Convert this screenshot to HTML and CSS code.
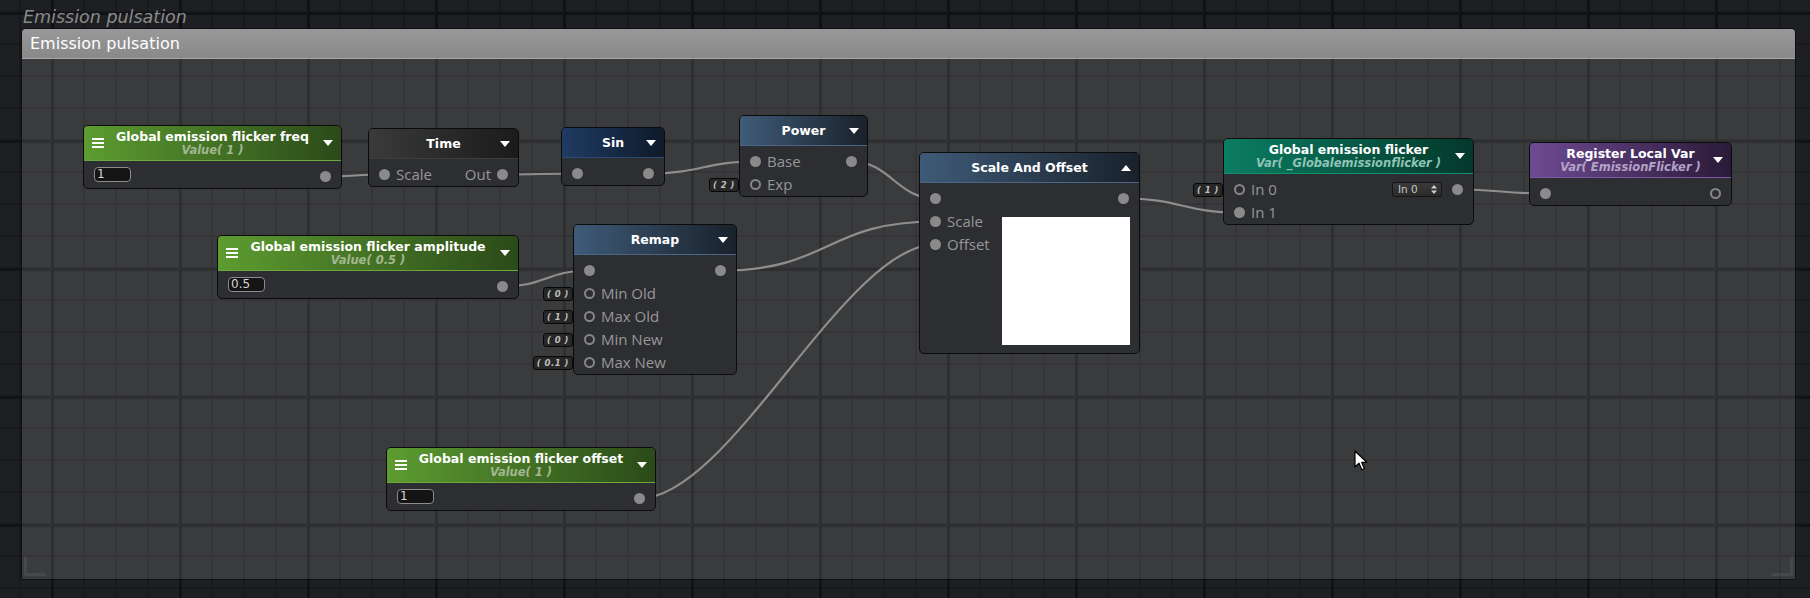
FILE: index.html
```html
<!DOCTYPE html>
<html>
<head>
<meta charset="utf-8">
<title>Emission pulsation</title>
<link rel="stylesheet" href="styles.css">
</head>
<body>
<div class="canvas">
  <div class="group">
    <div class="group-title">Emission pulsation</div>
    <div class="group-box">
      <div class="group-head">Emission pulsation</div>
      <svg class="corner corner-bl" width="26" height="26" viewBox="0 0 26 26"><path d="M2 2 L5 5 L5 20 L22 20 L25 23 L2 23 Z" fill="rgba(255,255,255,0.07)"/></svg>
      <svg class="corner corner-br" width="26" height="26" viewBox="0 0 26 26"><path d="M24 2 L21 5 L21 20 L4 20 L1 23 L24 23 Z" fill="rgba(255,255,255,0.07)"/></svg>
    </div>
  </div>

  <svg class="wires" width="1810" height="598" viewBox="0 0 1810 598">
    <g fill="none" stroke="#8e8e8e" stroke-width="2.2" stroke-linecap="round">
      <path d="M325.5 176.5 C350 176.5 360 174.5 384.5 174.5"/>
      <path d="M502.5 174.5 C530 174.5 550 173.5 577.5 173.5"/>
      <path d="M648.5 173.5 C700 173.5 705 161.5 755.5 161.5"/>
      <path d="M851.5 161.5 C890 161.5 897 198.5 935.5 198.5"/>
      <path d="M502.5 286.5 C545 286.5 547 270.5 589.5 270.5"/>
      <path d="M720.5 270.5 C830 270.5 826 221.5 935.5 221.5"/>
      <path d="M639.5 498.5 C730 498.5 845 244.5 935.5 244.5"/>
      <path d="M1123.5 198.5 C1180 198.5 1183 212.5 1239.5 212.5"/>
      <path d="M1457.5 189.5 C1500 189.5 1503 193.5 1545.5 193.5"/>
    </g>
  </svg>

  <!-- Global emission flicker freq -->
  <div class="node green n-freq">
    <div class="hd two">
      <span class="menu"><i></i><i></i><i></i></span>
      <div class="ttl"><div class="t">Global emission flicker freq</div><div class="s">Value( 1 )</div></div>
      <span class="arr"></span>
    </div>
    <div class="bd">
      <div class="row"><span class="val">1</span><span class="fill"></span><span class="port"></span></div>
    </div>
  </div>

  <!-- Time -->
  <div class="node dark n-time">
    <div class="hd">
      <span></span>
      <div class="ttl"><div class="t">Time</div></div>
      <span class="arr"></span>
    </div>
    <div class="bd">
      <div class="row"><span class="port"></span><span class="lbl">Scale</span><span class="fill"></span><span class="lbl">Out</span><span class="port"></span></div>
    </div>
  </div>

  <!-- Sin -->
  <div class="node navy n-sin">
    <div class="hd">
      <span></span>
      <div class="ttl"><div class="t">Sin</div></div>
      <span class="arr"></span>
    </div>
    <div class="bd">
      <div class="row"><span class="port"></span><span class="fill"></span><span class="port"></span></div>
    </div>
  </div>

  <!-- Power -->
  <div class="node steel n-power">
    <div class="hd">
      <span></span>
      <div class="ttl"><div class="t">Power</div></div>
      <span class="arr"></span>
    </div>
    <div class="bd">
      <div class="row"><span class="port"></span><span class="lbl">Base</span><span class="fill"></span><span class="port"></span></div>
      <div class="row"><span class="tag">( 2 )</span><span class="port ring"></span><span class="lbl">Exp</span></div>
    </div>
  </div>

  <!-- Global emission flicker amplitude -->
  <div class="node green n-amp">
    <div class="hd two">
      <span class="menu"><i></i><i></i><i></i></span>
      <div class="ttl"><div class="t">Global emission flicker amplitude</div><div class="s">Value( 0.5 )</div></div>
      <span class="arr"></span>
    </div>
    <div class="bd">
      <div class="row"><span class="val">0.5</span><span class="fill"></span><span class="port"></span></div>
    </div>
  </div>

  <!-- Remap -->
  <div class="node steel n-remap">
    <div class="hd">
      <span></span>
      <div class="ttl"><div class="t">Remap</div></div>
      <span class="arr"></span>
    </div>
    <div class="bd">
      <div class="row"><span class="port"></span><span class="fill"></span><span class="port"></span></div>
      <div class="row"><span class="tag">( 0 )</span><span class="port ring"></span><span class="lbl">Min Old</span></div>
      <div class="row"><span class="tag">( 1 )</span><span class="port ring"></span><span class="lbl">Max Old</span></div>
      <div class="row"><span class="tag">( 0 )</span><span class="port ring"></span><span class="lbl">Min New</span></div>
      <div class="row"><span class="tag">( 0.1 )</span><span class="port ring"></span><span class="lbl">Max New</span></div>
    </div>
  </div>

  <!-- Global emission flicker offset -->
  <div class="node green n-offset">
    <div class="hd two">
      <span class="menu"><i></i><i></i><i></i></span>
      <div class="ttl"><div class="t">Global emission flicker offset</div><div class="s">Value( 1 )</div></div>
      <span class="arr"></span>
    </div>
    <div class="bd">
      <div class="row"><span class="val">1</span><span class="fill"></span><span class="port"></span></div>
    </div>
  </div>

  <!-- Scale And Offset -->
  <div class="node steel n-sao">
    <div class="hd">
      <span></span>
      <div class="ttl"><div class="t">Scale And Offset</div></div>
      <span class="arr up"></span>
    </div>
    <div class="bd bd-sao">
      <div class="row"><span class="port"></span><span class="fill"></span><span class="port"></span></div>
      <div class="sao-main">
        <div class="sao-col">
          <div class="row"><span class="port"></span><span class="lbl">Scale</span></div>
          <div class="row"><span class="port"></span><span class="lbl">Offset</span></div>
        </div>
        <div class="preview"></div>
      </div>
    </div>
  </div>

  <!-- Global emission flicker (Var) -->
  <div class="node teal n-teal">
    <div class="hd two">
      <span></span>
      <div class="ttl"><div class="t">Global emission flicker</div><div class="s">Var( _Globalemissionflicker )</div></div>
      <span class="arr"></span>
    </div>
    <div class="bd">
      <div class="row"><span class="tag">( 1 )</span><span class="port ring"></span><span class="lbl">In 0</span><span class="fill"></span>
        <span class="dd"><span>In 0</span><svg width="6" height="9" viewBox="0 0 6 9"><path d="M3 0 L6 3.5 L0 3.5 Z M0 5.5 L6 5.5 L3 9 Z" fill="#cfcfcf"/></svg></span>
        <span class="port"></span></div>
      <div class="row"><span class="port"></span><span class="lbl">In 1</span></div>
    </div>
  </div>

  <!-- Register Local Var -->
  <div class="node purple n-reg">
    <div class="hd two">
      <span></span>
      <div class="ttl"><div class="t">Register Local Var</div><div class="s">Var( EmissionFlicker )</div></div>
      <span class="arr"></span>
    </div>
    <div class="bd">
      <div class="row"><span class="port"></span><span class="fill"></span><span class="port ring"></span></div>
    </div>
  </div>

  <svg class="cursor" width="14" height="22" viewBox="0 0 14 22"><path d="M1 1 L1 17 L5 13.2 L7.8 19.8 L10.4 18.7 L7.7 12.3 L12.8 12.3 Z" fill="#fff" stroke="#000" stroke-width="1.2" stroke-linejoin="round"/></svg>
</div>
</body>
</html>
```

FILE: styles.css
```css
* { box-sizing: border-box; }

html, body {
  margin: 0;
  padding: 0;
  background: #1f2023;
}

.canvas {
  position: relative;
  width: 1810px;
  height: 598px;
  overflow: hidden;
  background-color: #1e1f22;
  background-image:
    linear-gradient(to right, #111214 0, #111214 3px, transparent 3px),
    linear-gradient(to bottom, #111214 0, #111214 3px, transparent 3px),
    linear-gradient(to right, #18191b 0, #18191b 2px, transparent 2px),
    linear-gradient(to bottom, #18191b 0, #18191b 2px, transparent 2px);
  background-size: 128px 128px, 128px 128px, 32px 32px, 32px 32px;
  background-position: 51px 0, 0 12px, 19px 0, 0 11px;
  font-family: "DejaVu Sans", sans-serif;
}

/* ---------- group (commentary) ---------- */
.group {
  position: absolute;
  left: 21px;
  top: 0;
  width: 1775px;
  display: flex;
  flex-direction: column;
}

.group-title {
  height: 28px;
  padding: 6px 0 0 2px;
  font: italic 17.5px/22px "DejaVu Sans", sans-serif;
  color: #8b8b8b;
  white-space: nowrap;
}

.group-box {
  position: relative;
  height: 552px;
  border: 1px solid #0e0f10;
  border-radius: 5px 5px 2px 2px;
  background: rgba(255, 255, 255, 0.125);
}

.group-head {
  height: 30px;
  padding-left: 8px;
  border-radius: 4px 4px 0 0;
  border-bottom: 1px solid #a6a6a6;
  background: linear-gradient(#989898, #898989);
  font: 16px/29px "DejaVu Sans", sans-serif;
  color: #ffffff;
}

.corner {
  position: absolute;
  bottom: 0;
}
.corner-bl { left: 0; }
.corner-br { right: 0; }

/* ---------- wires ---------- */
.wires {
  position: absolute;
  left: 0;
  top: 0;
}

/* ---------- nodes ---------- */
.node {
  position: absolute;
  border: 1px solid #0b0b0c;
  border-radius: 5px;
  background: #2d2e32;
  color: #fff;
}

.hd {
  display: grid;
  grid-template-columns: 1fr auto 1fr;
  align-items: center;
  height: 30px;
  padding: 0 8px;
  border-bottom: 1px solid #444;
  border-radius: 4px 4px 0 0;
}
.hd.two { height: 35px; }

.ttl { text-align: center; white-space: nowrap; }
.t {
  font: bold 12.5px/14px "DejaVu Sans", sans-serif;
  color: #ffffff;
}
.s {
  font: italic bold 11.5px/13px "DejaVu Sans", sans-serif;
}

.arr {
  justify-self: end;
  width: 0;
  height: 0;
  border-left: 5.5px solid transparent;
  border-right: 5.5px solid transparent;
  border-top: 6px solid #ffffff;
}
.arr.up {
  border-top: 0;
  border-bottom: 6px solid #ffffff;
}

.menu {
  justify-self: start;
  display: flex;
  flex-direction: column;
  gap: 2px;
  width: 12px;
}
.menu i {
  display: block;
  height: 2px;
  background: #ffffff;
}

.bd { padding: 4px 10px 0; }
.bd-sao { padding-bottom: 8px; }

.row {
  position: relative;
  display: flex;
  align-items: center;
  gap: 6px;
  height: 23px;
}
.fill { flex: 1; }

.port {
  flex: none;
  width: 11px;
  height: 11px;
  border-radius: 50%;
  background: #8a8a8a;
}
.port.ring {
  background: transparent;
  border: 2.5px solid #868686;
}

.lbl {
  font: 400 15px/23px "Open Sans", "DejaVu Sans", sans-serif;
  color: #979797;
  white-space: nowrap;
}

.val {
  flex: none;
  width: 37px;
  height: 15px;
  margin-bottom: 4px;
  padding-left: 2px;
  border: 1px solid #8c8c8c;
  border-radius: 4px;
  background: #141414;
  font: 12px/13px "DejaVu Sans", sans-serif;
  color: #d6d6d6;
}

.tag {
  position: absolute;
  right: calc(100% + 11px);
  top: 4.5px;
  height: 14px;
  padding: 0 3px;
  border: 1px solid #070707;
  border-radius: 3px;
  background: #272727;
  font: italic bold 8.5px/12px "DejaVu Sans", sans-serif;
  letter-spacing: 0.5px;
  color: #bdbdbd;
  white-space: nowrap;
}

.dd {
  flex: none;
  display: flex;
  align-items: center;
  justify-content: space-between;
  width: 50px;
  height: 15px;
  margin-right: 4px;
  padding: 0 4px 0 5px;
  border: 1px solid #151515;
  border-radius: 2px;
  background: linear-gradient(#3a3a3a, #2a2a2a);
  font: 10.5px/13px "DejaVu Sans", sans-serif;
  color: #c8c8c8;
}

.sao-main {
  display: flex;
  justify-content: space-between;
}
.preview {
  width: 128px;
  height: 128px;
  margin-top: 7px;
  margin-right: -1px;
  background: #ffffff;
}

/* ---------- node themes ---------- */
.green .hd { background: linear-gradient(to right, #5d9c30, #2b4a19); border-bottom-color: #6aa83c; }
.green .s { color: #a3b792; }
.dark .hd { background: linear-gradient(to right, #3a3a3a, #1b1b1b); border-bottom-color: #3e3e3e; }
.navy .hd { background: linear-gradient(to right, #1f3b63, #0f1a2a); border-bottom-color: #2c4a70; }
.steel .hd { background: linear-gradient(to right, #3f5b78, #19212b); border-bottom-color: #4b6684; }
.teal .hd { background: linear-gradient(to right, #0a7d62, #03382b); border-bottom-color: #13906f; }
.teal .s { color: #8fc4b5; }
.purple .hd { background: linear-gradient(to right, #6e4a92, #2a1a38); border-bottom-color: #7d58a3; }
.purple .s { color: #b4a3c6; }

/* ---------- node placement on the graph canvas ---------- */
.n-freq   { left: 83px;   top: 125px; width: 259px; }
.n-time   { left: 368px;  top: 128px; width: 151px; }
.n-sin    { left: 561px;  top: 127px; width: 104px; }
.n-power  { left: 739px;  top: 115px; width: 129px; }
.n-amp    { left: 217px;  top: 235px; width: 302px; }
.n-remap  { left: 573px;  top: 224px; width: 164px; }
.n-offset { left: 386px;  top: 447px; width: 270px; }
.n-sao    { left: 919px;  top: 152px; width: 221px; }
.n-teal   { left: 1223px; top: 138px; width: 251px; }
.n-reg    { left: 1529px; top: 142px; width: 203px; }

.cursor {
  position: absolute;
  left: 1354px;
  top: 450px;
}
```
